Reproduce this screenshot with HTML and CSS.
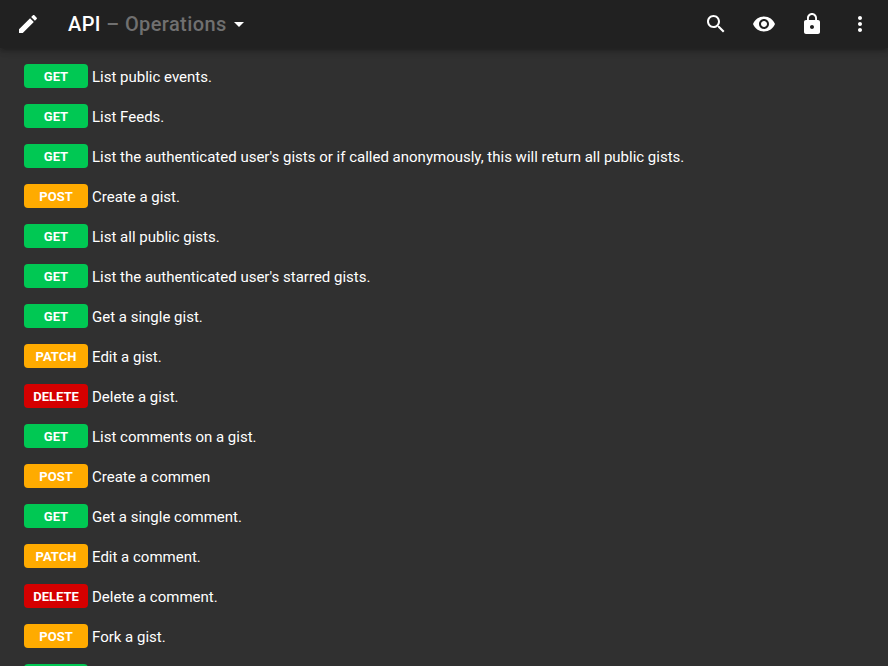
FILE: index.html
```html
<!DOCTYPE html>
<html lang="en">
<head>
<meta charset="utf-8">
<title>API – Operations</title>
<link rel="stylesheet" href="styles.css">
</head>
<body>
<header class="toolbar">
  <svg class="icon" viewBox="0 0 24 24"><path d="M3 17.25V21h3.75L17.81 9.94l-3.75-3.75L3 17.25zM20.71 7.04c.39-.39.39-1.02 0-1.41l-2.34-2.34c-.39-.39-1.02-.39-1.41 0l-1.83 1.83 3.75 3.75 1.83-1.83z"/></svg>
  <h1 class="title">API <span class="section">– Operations</span></h1>
  <svg class="icon" viewBox="0 0 24 24"><path d="M7 10l5 5 5-5z"/></svg>
  <nav class="actions">
    <svg class="icon" viewBox="0 0 24 24"><path d="M15.5 14h-.79l-.28-.27C15.41 12.59 16 11.11 16 9.5 16 5.91 13.09 3 9.5 3S3 5.91 3 9.5 5.91 16 9.5 16c1.61 0 3.09-.59 4.23-1.57l.27.28v.79l5 4.99L20.49 19l-4.99-5zm-6 0C7.01 14 5 11.99 5 9.5S7.01 5 9.5 5 14 7.01 14 9.5 11.99 14 9.5 14z"/></svg>
    <svg class="icon" viewBox="0 0 24 24"><path d="M12 4.5C7 4.5 2.73 7.61 1 12c1.73 4.39 6 7.5 11 7.5s9.27-3.11 11-7.5c-1.73-4.39-6-7.5-11-7.5zM12 17c-2.76 0-5-2.24-5-5s2.24-5 5-5 5 2.24 5 5-2.24 5-5 5zm0-8c-1.66 0-3 1.34-3 3s1.34 3 3 3 3-1.34 3-3-1.34-3-3-3z"/></svg>
    <svg class="icon" viewBox="0 0 24 24"><path d="M18 8h-1V6c0-2.76-2.24-5-5-5S7 3.24 7 6v2H6c-1.1 0-2 .9-2 2v10c0 1.1.9 2 2 2h12c1.1 0 2-.9 2-2V10c0-1.1-.9-2-2-2zm-6 9c-1.1 0-2-.9-2-2s.9-2 2-2 2 .9 2 2-.9 2-2 2zm3.1-9H8.9V6c0-1.71 1.39-3.1 3.1-3.1 1.71 0 3.1 1.39 3.1 3.1v2z"/></svg>
    <svg class="icon" viewBox="0 0 24 24"><path d="M12 8c1.1 0 2-.9 2-2s-.9-2-2-2-2 .9-2 2 .9 2 2 2zm0 2c-1.1 0-2 .9-2 2s.9 2 2 2 2-.9 2-2-.9-2-2-2zm0 6c-1.1 0-2 .9-2 2s.9 2 2 2 2-.9 2-2-.9-2-2-2z"/></svg>
  </nav>
</header>
<ul class="operations">
  <li class="operation"><span class="method get">GET</span><span class="summary">List public events.</span></li>
  <li class="operation"><span class="method get">GET</span><span class="summary">List Feeds.</span></li>
  <li class="operation"><span class="method get">GET</span><span class="summary">List the authenticated user's gists or if called anonymously, this will return all public gists.</span></li>
  <li class="operation"><span class="method post">POST</span><span class="summary">Create a gist.</span></li>
  <li class="operation"><span class="method get">GET</span><span class="summary">List all public gists.</span></li>
  <li class="operation"><span class="method get">GET</span><span class="summary">List the authenticated user's starred gists.</span></li>
  <li class="operation"><span class="method get">GET</span><span class="summary">Get a single gist.</span></li>
  <li class="operation"><span class="method patch">PATCH</span><span class="summary">Edit a gist.</span></li>
  <li class="operation"><span class="method delete">DELETE</span><span class="summary">Delete a gist.</span></li>
  <li class="operation"><span class="method get">GET</span><span class="summary">List comments on a gist.</span></li>
  <li class="operation"><span class="method post">POST</span><span class="summary">Create a commen</span></li>
  <li class="operation"><span class="method get">GET</span><span class="summary">Get a single comment.</span></li>
  <li class="operation"><span class="method patch">PATCH</span><span class="summary">Edit a comment.</span></li>
  <li class="operation"><span class="method delete">DELETE</span><span class="summary">Delete a comment.</span></li>
  <li class="operation"><span class="method post">POST</span><span class="summary">Fork a gist.</span></li>
  <li class="operation"><span class="method get"></span></li>
</ul>
</body>
</html>
```
FILE: styles.css
```css
* {
  box-sizing: border-box;
}

body {
  margin: 0;
  height: 666px;
  overflow: hidden;
  background: #303030;
  color: #fff;
  font-family: Roboto, sans-serif;
}

.toolbar {
  position: relative;
  display: flex;
  align-items: center;
  height: 48px;
  padding: 0 16px;
  background: #212121;
  box-shadow: 0 2px 4px -1px rgba(0, 0, 0, .2), 0 4px 5px rgba(0, 0, 0, .14), 0 1px 10px rgba(0, 0, 0, .12);
}

.icon {
  width: 24px;
  height: 24px;
  fill: #fff;
  flex: none;
}

.title {
  margin: 0 0 0 28px;
  font-size: 20px;
  font-weight: 500;
  line-height: 24px;
  letter-spacing: .4px;
}

.section {
  color: #707070;
}

.actions {
  display: flex;
  gap: 24px;
  margin-left: auto;
}

.operations {
  margin: 0;
  padding: 8px 24px 0;
  list-style: none;
}

.operation {
  display: flex;
  align-items: center;
  gap: 4px;
  height: 40px;
  font-size: 15px;
  white-space: nowrap;
}

.summary {
  padding-top: 2px;
}

.method {
  width: 64px;
  height: 24px;
  border-radius: 4px;
  font-size: 13px;
  font-weight: 700;
  line-height: 25px;
  text-align: center;
}

.get {
  background: #00c853;
}

.post,
.patch {
  background: #ffab00;
}

.delete {
  background: #d50000;
}
```
